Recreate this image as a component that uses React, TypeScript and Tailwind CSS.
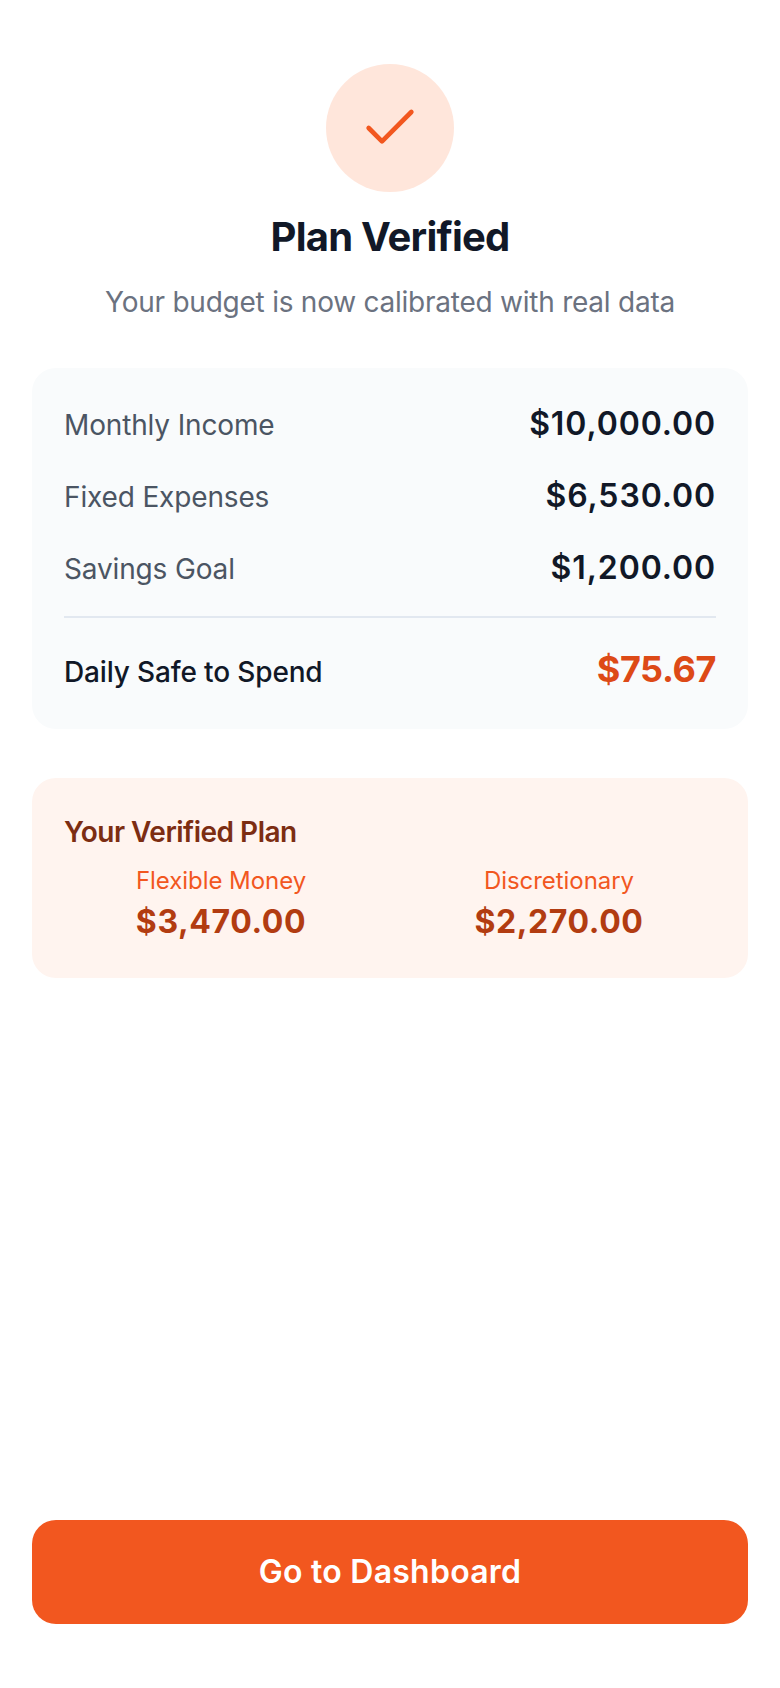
const FONT = "font-['Inter',sans-serif]";

const rows = [
  { label: "Monthly Income", value: "$10,000.00" },
  { label: "Fixed Expenses", value: "$6,530.00" },
  { label: "Savings Goal", value: "$1,200.00" },
];

const split = [
  { label: "Flexible Money", value: "$3,470.00" },
  { label: "Discretionary", value: "$2,270.00" },
];

export default function App() {
  return (
    <div className={`${FONT} flex h-[1688px] flex-col bg-white px-8 pt-16 pb-16`}>
      {/* Header */}
      <div className="flex flex-col items-center">
        <div className="flex h-32 w-32 items-center justify-center rounded-full bg-[#ffe6db]">
          <svg className="h-16 w-16" viewBox="0 0 24 24" fill="none" stroke="#f2571f" strokeWidth="1.75" strokeLinecap="round" strokeLinejoin="round">
            <path d="M20 6 9 17l-5-5" />
          </svg>
        </div>
        <h1 className="mt-[19px] text-[40px] leading-[52px] font-bold tracking-[-0.8px] text-[#111827]">Plan Verified</h1>
        <p className="mt-[21px] text-[28px] leading-[36px] tracking-[-0.24px] text-[#6b7280]">Your budget is now calibrated with real data</p>
      </div>

      {/* Summary */}
      <div className="mt-[48px] flex flex-col rounded-3xl bg-[#f9fbfc] px-8 pt-9 pb-[38px]">
        <div className="flex flex-col gap-8">
          {rows.map((r) => (
            <div key={r.label} className="flex items-baseline justify-between">
              <span className="text-[28px] leading-9 tracking-[-0.15px] text-[#4b5563]">{r.label}</span>
              <span className="text-[32px] leading-10 font-semibold tracking-[0.9px] text-[#111827]">{r.value}</span>
            </div>
          ))}
        </div>
        <div className="mt-7 h-0.5 bg-[#e2e8f0]" />
        <div className="mt-[29px] flex items-baseline justify-between">
          <span className="text-[28px] leading-9 font-medium tracking-[-0.15px] text-[#111827]">Daily Safe to Spend</span>
          <span className="text-[36px] leading-11 font-bold tracking-[-0.4px] text-[#dd4a17]">$75.67</span>
        </div>
      </div>

      {/* Verified plan */}
      <div className="mt-[49px] rounded-3xl bg-[#fff4ef] px-8 pt-[34px] pb-9">
        <h2 className="text-[28px] leading-10 font-semibold tracking-[-0.5px] text-[#7c2d12]">Your Verified Plan</h2>
        <div className="mt-[13px] grid grid-cols-2 gap-6">
          {split.map((s) => (
            <div key={s.label} className="flex flex-col items-center">
              <span className="text-[24px] leading-8 tracking-[-0.05px] text-[#f2571f]">{s.label}</span>
              <span className="mt-[5px] text-[32px] leading-10 font-bold tracking-[0.6px] text-[#b23c11]">{s.value}</span>
            </div>
          ))}
        </div>
      </div>

      <button className="mt-auto h-[104px] w-full rounded-3xl bg-[#f2571f] text-[32px] font-semibold tracking-[0.25px] text-white">
        Go to Dashboard
      </button>
    </div>
  );
}
